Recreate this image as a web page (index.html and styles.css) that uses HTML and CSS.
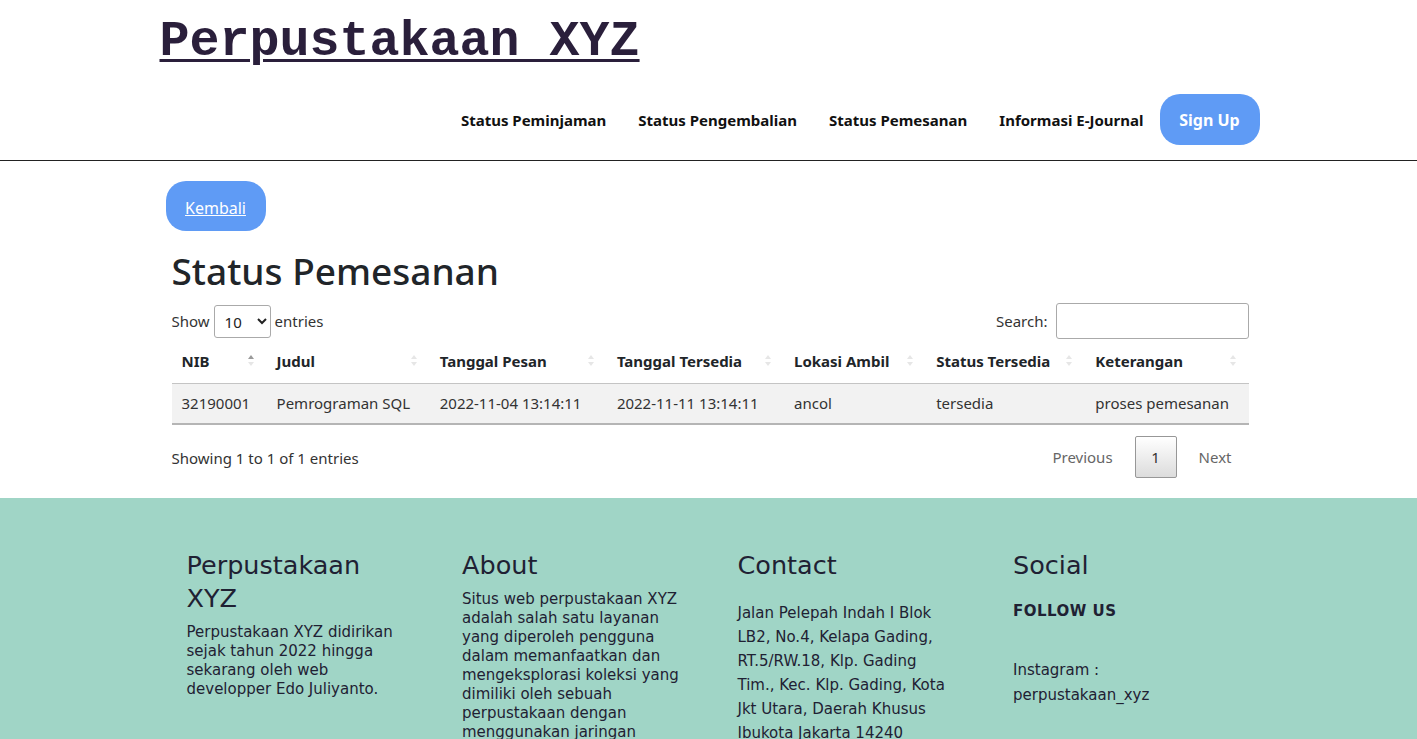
FILE: index.html
```html
<!DOCTYPE html>
<html lang="id">
<head>
<meta charset="utf-8">
<title>Status Pemesanan - Perpustakaan XYZ</title>
<link rel="stylesheet" href="styles.css">
</head>
<body>
<header class="site-header">
  <div class="header-inner">
    <a class="brand" href="#">Perpustakaan XYZ</a>
    <nav class="nav">
      <a class="nav-link" href="#">Status Peminjaman</a>
      <a class="nav-link" href="#">Status Pengembalian</a>
      <a class="nav-link" href="#">Status Pemesanan</a>
      <a class="nav-link" href="#">Informasi E-Journal</a>
      <a class="btn-signup" href="#">Sign Up</a>
    </nav>
  </div>
</header>

<main class="main">
  <div class="main-inner">
    <a class="btn-back" href="#">Kembali</a>
    <h1 class="page-title">Status Pemesanan</h1>

    <div class="dt-top">
      <label class="dt-length">Show
        <select class="dt-select">
          <option>10</option>
          <option>25</option>
          <option>50</option>
          <option>100</option>
        </select>
        entries</label>
      <label class="dt-search">Search: <input type="search" class="dt-input"></label>
    </div>

    <table class="dt-table">
      <colgroup>
        <col class="c1"><col class="c2"><col class="c3"><col class="c4"><col class="c5"><col class="c6"><col class="c7">
      </colgroup>
      <thead>
        <tr>
          <th><div class="th-in"><span>NIB</span><span class="sort asc"><i class="up"></i><i class="down"></i></span></div></th>
          <th><div class="th-in"><span>Judul</span><span class="sort"><i class="up"></i><i class="down"></i></span></div></th>
          <th><div class="th-in"><span>Tanggal Pesan</span><span class="sort"><i class="up"></i><i class="down"></i></span></div></th>
          <th><div class="th-in"><span>Tanggal Tersedia</span><span class="sort"><i class="up"></i><i class="down"></i></span></div></th>
          <th><div class="th-in"><span>Lokasi Ambil</span><span class="sort"><i class="up"></i><i class="down"></i></span></div></th>
          <th><div class="th-in"><span>Status Tersedia</span><span class="sort"><i class="up"></i><i class="down"></i></span></div></th>
          <th><div class="th-in"><span>Keterangan</span><span class="sort"><i class="up"></i><i class="down"></i></span></div></th>
        </tr>
      </thead>
      <tbody>
        <tr class="odd">
          <td>32190001</td>
          <td>Pemrograman SQL</td>
          <td>2022-11-04 13:14:11</td>
          <td>2022-11-11 13:14:11</td>
          <td>ancol</td>
          <td>tersedia</td>
          <td>proses pemesanan</td>
        </tr>
      </tbody>
    </table>

    <div class="dt-bottom">
      <div class="dt-info">Showing 1 to 1 of 1 entries</div>
      <div class="dt-paging">
        <span class="pg-btn disabled">Previous</span>
        <span class="pg-btn current">1</span>
        <span class="pg-btn disabled">Next</span>
      </div>
    </div>
  </div>
</main>

<footer class="site-footer">
  <div class="footer-inner">
    <div class="f-col">
      <h3 class="f-title">Perpustakaan XYZ</h3>
      <p class="f-text">Perpustakaan XYZ didirikan sejak tahun 2022 hingga sekarang oleh web developper Edo Juliyanto.</p>
    </div>
    <div class="f-col">
      <h3 class="f-title">About</h3>
      <p class="f-text">Situs web perpustakaan XYZ adalah salah satu layanan yang diperoleh pengguna dalam memanfaatkan dan mengeksplorasi koleksi yang dimiliki oleh sebuah perpustakaan dengan menggunakan jaringan internet.</p>
    </div>
    <div class="f-col">
      <h3 class="f-title">Contact</h3>
      <p class="f-text f-contact">Jalan Pelepah Indah I Blok LB2, No.4, Kelapa Gading, RT.5/RW.18, Klp. Gading Tim., Kec. Klp. Gading, Kota Jkt Utara, Daerah Khusus Ibukota Jakarta 14240</p>
    </div>
    <div class="f-col">
      <h3 class="f-title">Social</h3>
      <h5 class="f-follow">FOLLOW US</h5>
      <p class="f-text f-social">Instagram :<br>perpustakaan_xyz</p>
    </div>
  </div>
</footer>
</body>
</html>
```

FILE: styles.css
```css
* { box-sizing: border-box; }

body {
  margin: 0;
  font-family: "Noto Sans", "Open Sans", sans-serif;
  font-size: 16px;
  color: #212529;
  background: #fff;
}

/* Header */
.site-header {
  border-bottom: 1px solid #222;
}
.header-inner {
  width: 1100px;
  margin: 0 auto;
  padding: 13px 0 15px;
  display: flex;
  flex-direction: column;
}
.brand {
  align-self: flex-start;
  font-family: "Liberation Mono", "Courier New", monospace;
  font-weight: 700;
  font-size: 50px;
  line-height: 57px;
  color: #2a1f3b;
  text-decoration: underline;
  text-decoration-thickness: 3px;
  text-underline-offset: 4px;
  margin-left: 1px;
}
.nav {
  display: flex;
  justify-content: flex-end;
  align-items: center;
  margin-top: 24px;
}
.nav-link {
  font-weight: 700;
  font-size: 15px;
  color: #111;
  text-decoration: none;
  padding: 0 16px;
}
.btn-signup {
  display: flex;
  align-items: center;
  justify-content: center;
  width: 100px;
  height: 51px;
  border-radius: 20px;
  background: #5f9bf5;
  color: #fff;
  font-weight: 700;
  font-size: 16px;
  text-decoration: none;
  margin-right: -1px;
}

/* Main */
.main-inner {
  width: 1100px;
  margin: 0 auto;
  padding: 20px 10px 20px 13px;
}
.btn-back {
  display: flex;
  align-items: center;
  justify-content: center;
  width: 100px;
  height: 50px;
  padding-top: 3px;
  margin-left: -6px;
  border-radius: 20px;
  background: #5f9bf5;
  color: #fff;
  font-size: 16px;
  text-decoration: underline;
}
.page-title {
  margin: 17px 0 0;
  font-size: 37px;
  font-weight: 500;
  line-height: 46px;
  color: #212529;
}

.dt-top {
  display: flex;
  justify-content: space-between;
  align-items: center;
  margin-top: 9px;
  font-size: 15px;
  color: #333;
}
.dt-length {
  display: flex;
  align-items: center;
  gap: 4px;
}
.dt-select {
  width: 57px;
  height: 33px;
  margin-top: 1px;
  padding: 0 4px 0 6px;
  border: 1px solid #aaa;
  border-radius: 3px;
  background: #fff;
  font-family: inherit;
  font-size: 15px;
  color: #222;
}
.dt-search {
  display: flex;
  align-items: center;
  gap: 8px;
}
.dt-input {
  width: 193px;
  height: 36px;
  border: 1px solid #aaa;
  border-radius: 3px;
  padding: 4px;
}

/* Table */
.dt-table {
  width: 100%;
  margin-top: 6px;
  border-collapse: collapse;
  table-layout: fixed;
  font-size: 15px;
}
.c1 { width: 95px; }
.c2 { width: 163px; }
.c3 { width: 177px; }
.c4 { width: 177px; }
.c5 { width: 142px; }
.c6 { width: 159px; }
.c7 { width: 163px; }

.dt-table th {
  height: 38px;
  padding: 0 10px 6px;
  text-align: left;
  font-weight: 700;
  color: #212529;
  border-bottom: 1px solid #c4c4c4;
  white-space: nowrap;
}
.th-in {
  display: flex;
  justify-content: space-between;
  align-items: center;
}
.sort {
  display: flex;
  flex-direction: column;
  gap: 3px;
  margin-right: 3px;
}
.sort i {
  display: block;
  width: 0;
  height: 0;
  border-left: 3px solid transparent;
  border-right: 3px solid transparent;
}
.sort .up { border-bottom: 4px solid #e6e6e6; }
.sort .down { border-top: 4px solid #e6e6e6; }
.sort.asc .up { border-bottom-color: #9a9a9a; }

.dt-table td {
  height: 41px;
  padding: 0 10px;
  color: #333;
  white-space: nowrap;
  border-bottom: 2px solid #b5b5b5;
}
.dt-table tr.odd td {
  background: #f2f2f2;
}

.dt-bottom {
  display: flex;
  justify-content: space-between;
  align-items: center;
  margin-top: 11px;
  font-size: 15px;
  color: #333;
}
.dt-info {
  padding-top: 2px;
}
.dt-paging {
  display: flex;
  align-items: center;
  gap: 2px;
}
.pg-btn {
  display: flex;
  align-items: center;
  justify-content: center;
  height: 42px;
  padding: 0 17px;
  color: #666;
}
.pg-btn.current {
  width: 42px;
  padding: 0;
  border: 1px solid #979797;
  border-radius: 2px;
  background: linear-gradient(to bottom, #ffffff 0%, #dcdcdc 100%);
  color: #333;
  margin: 0 3px;
}

/* Footer */
.site-footer {
  background: #a0d5c6;
  padding: 51px 0 40px;
  font-family: "DejaVu Sans", sans-serif;
  color: #1f2133;
}
.footer-inner {
  width: 1100px;
  margin: 0 auto;
  padding-left: 28px;
  display: grid;
  grid-template-columns: repeat(4, 220px);
  column-gap: 55.5px;
}
.f-title {
  margin: 0 0 8px;
  font-size: 25.5px;
  font-weight: 400;
  line-height: 33px;
}
.f-text {
  margin: 0;
  font-size: 15px;
  line-height: 19px;
}
.f-contact {
  margin-top: 19px;
  line-height: 24px;
}
.f-follow {
  margin: 19px 0 0;
  font-size: 15px;
  font-weight: 700;
  line-height: 20px;
  letter-spacing: 0.5px;
}
.f-social {
  margin-top: 37px;
  line-height: 25px;
}
```
